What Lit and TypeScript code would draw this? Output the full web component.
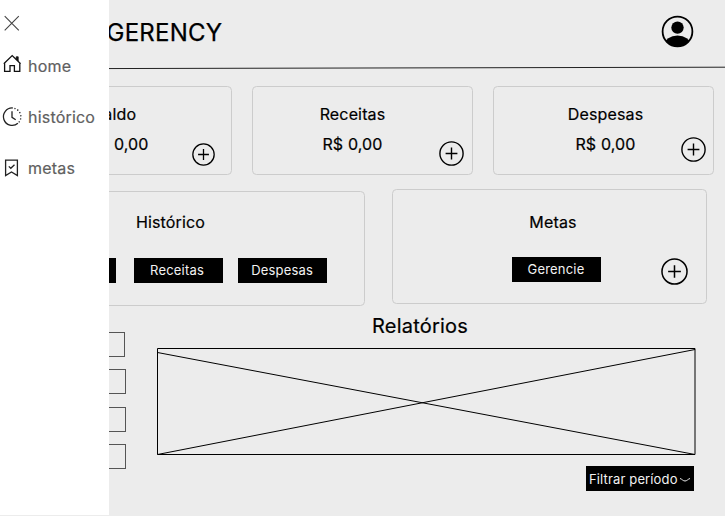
import { LitElement, html, css, svg } from "lit";
import { customElement, property } from "lit/decorators.js";

const closeIcon = svg`<path d="M4.7 16.2 18.8 30.3M18.8 16.2 4.7 30.3" stroke="#444" stroke-width="1.1"/>`;

@customElement("plus-button")
export class PlusButton extends LitElement {
  @property({ type: Number }) size = 25;
  static styles = css`
    :host { display: block; line-height: 0; }
    svg { display: block; }
  `;
  render() {
    return html`<svg width=${this.size} height=${this.size} viewBox="0 0 25 25" fill="none" stroke="#000" stroke-width="1.4">
      <circle cx="12.5" cy="12.5" r="11.6"></circle>
      <path d="M12.5 6.6v11.8M6.6 12.5h11.8"></path>
    </svg>`;
  }
}

@customElement("app-root")
export class AppRoot extends LitElement {
  static styles = css`
    :host {
      display: block; position: relative; width: 725px; height: 516px; overflow: hidden;
      background: #ececec; color: #000;
      font-family: Inter, "Liberation Sans", sans-serif; font-size: 16px; line-height: 20px;
    }
    * { box-sizing: border-box; }
    svg { display: block; }
    .page { display: flex; flex-direction: column; height: 516px; }
    header { display: flex; justify-content: space-between; height: 66px; padding: 15px 31px 0 106.5px; }
    h1 { margin: 3px 0 0; font-size: 24px; line-height: 30px; font-weight: 400; letter-spacing: .25px; -webkit-text-stroke: .25px #000; white-space: nowrap; }
    h2, p { margin: 0; font-size: 16px; line-height: 20px; font-weight: 400; text-align: center; letter-spacing: .15px; -webkit-text-stroke: .2px #000; white-space: nowrap; }
    .rule { flex: none; }
    .cards { display: grid; grid-template-columns: repeat(3, 221px); column-gap: 20px; padding: 15.5px 0 0 11px; }
    .card { display: grid; border: 1px solid #ccc; border-radius: 4.5px; }
    .cards .card { height: 89px; }
    .text { grid-area: 1 / 1; padding-top: 17px; display: flex; flex-direction: column; gap: 10px; }
    .receitas .text { padding-right: 20px; }
    .saldo .text { padding-right: 6px; }
    .saldo h2 { padding-right: 8px; }
    .despesas .text { padding-left: 4px; }
    plus-button { grid-area: 1 / 1; place-self: end; }
    .saldo plus-button { margin: 0 16px 8px 0; }
    .receitas plus-button { margin: 0 8px 8px 0; }
    .despesas plus-button { margin: 0 7px 12px 0; }
    .panels { display: flex; gap: 27px; padding: 14px 0 0 0; align-items: flex-start; }
    .history { width: 365px; height: 114.5px; margin-top: 2.5px; padding-top: 20px; grid-template-rows: 45.5px 25px; }
    .history h2 { padding-right: 24px; }
    .buttons { display: flex; padding-left: 26px; }
    .btn { width: 89px; height: 25px; background: #000; color: #f2f2f2; font-size: 13px; line-height: 24px; text-align: center; letter-spacing: .2px; }
    .history .btn:nth-child(1) { margin-right: 17.5px; }
    .history .btn:nth-child(2) { margin-right: 15.2px; }
    .history .btn:nth-child(2) { text-indent: -2px; }
    .goals { width: 315px; height: 115px; }
    .goals .text { padding-top: 22px; gap: 25px; padding-left: 7px; }
    .goals .btn { margin-left: 111.5px; }
    .goals plus-button { margin: 0 18px 18px 0; }
    .reports { display: flex; gap: 31px; padding-top: 8.5px; }
    .list { width: 126px; padding-top: 17.5px; display: flex; flex-direction: column; gap: 12.5px; }
    .item { height: 25px; border: 1px solid #555; }
    .list .item:first-child { width: 125.3px; }
    .chart { width: 539px; display: flex; flex-direction: column; }
    .chart h2 { font-size: 20px; line-height: 24px; padding-right: 13px; letter-spacing: .2px; }
    .chart svg.plot { margin-top: 9px; }
    .filter { align-self: flex-end; margin: 11px 2px 0 0; width: 108px; height: 25px; padding-left: 3px; background: #000; color: #f2f2f2; display: flex; align-items: center; gap: 1px; font-size: 13px; line-height: 24px; letter-spacing: .14px; white-space: nowrap; }
    aside { position: absolute; left: 0; top: 0; width: 109.4px; height: 515px; background: #fff; color: #606060; display: flex; flex-direction: column; }
    .close { height: 56px; flex: none; }
    nav { display: flex; flex-direction: column; gap: 31px; }
    nav a { display: flex; align-items: center; height: 20px; gap: 4px; letter-spacing: .2px; white-space: nowrap; -webkit-text-stroke: .2px #606060; }
    nav svg { flex: none; }
  `;

  render() {
    const card = (cls: string, label: string, size: number) => html`
      <section class="card ${cls}">
        <div class="text"><h2>${label}</h2><p>R$ 0,00</p></div>
        <plus-button .size=${size}></plus-button>
      </section>`;
    return html`
      <div class="page">
        <header>
          <h1>GERENCY</h1>
          <svg width="33" height="33" viewBox="0 0 33 33">
            <defs><clipPath id="face"><circle cx="16.5" cy="16.5" r="15"/></clipPath></defs>
            <circle cx="16.5" cy="16.5" r="14.9" fill="none" stroke="#000" stroke-width="1.8"/>
            <circle cx="16.5" cy="12.6" r="6.2"/>
            <ellipse cx="16.5" cy="29.5" rx="13" ry="9" clip-path="url(#face)"/>
          </svg>
        </header>
        <svg class="rule" width="725" height="4" viewBox="0 0 725 4"><path d="M0 2.8 725 1.2" stroke="#222" stroke-width="1"/></svg>
        <div class="cards">
          ${card("saldo", "Saldo", 23)}${card("receitas", "Receitas", 25)}${card("despesas", "Despesas", 25)}
        </div>
        <div class="panels">
          <section class="card history">
            <h2>Histórico</h2>
            <div class="buttons"><div class="btn">Saldo</div><div class="btn">Receitas</div><div class="btn">Despesas</div></div>
          </section>
          <section class="card goals">
            <div class="text"><h2>Metas</h2><div class="btn">Gerencie</div></div>
            <plus-button .size=${27}></plus-button>
          </section>
        </div>
        <div class="reports">
          <div class="list">${[0, 1, 2, 3].map(() => html`<div class="item"></div>`)}</div>
          <div class="chart">
            <h2>Relatórios</h2>
            <svg class="plot" width="539" height="108" viewBox="0 0 539 108" fill="none" stroke="#000">
              <path d="M.5 1.5H538V107.5H.5Z"/><path d="M.5 5.5 538 107.5M.5 107.5 538 2.5"/>
            </svg>
            <div class="filter"><span>Filtrar período</span>
              <svg width="12" height="8" viewBox="0 0 12 8" fill="none" stroke="#eee"><path d="M1 3.5C3 4 4 6 6 6S9 4 11 3.5"/></svg>
            </div>
          </div>
        </div>
      </div>
      <aside>
        <svg class="close" width="24" height="56" viewBox="0 0 24 56">${closeIcon}</svg>
        <nav>
          <a><svg width="24" height="24" viewBox="0 0 24 24" fill="none" stroke="#111" stroke-width="1.3">
            <path d="M4.6 9V17.4H10V11.6H14.4V17.4H19.8V9M3.8 9.8 12.2 1.6 20.6 9.8"/><path d="M16.2 2.8H18.2V7L16.2 5.2Z" fill="#111" stroke-width=".8"/></svg>home</a>
          <a><svg width="24" height="24" viewBox="0 0 24 24" fill="none" stroke="#222" stroke-width="1.3">
            <path d="M12.8 3A8.7 8.7 0 1 0 17.9 18.2M12 6.2V12.3L15.7 14.8"/><path d="M14.4 3.3A8.7 8.7 0 0 1 18.4 17.8" stroke-dasharray="1.3 1.9"/></svg>histórico</a>
          <a><svg width="24" height="24" viewBox="0 0 24 24" fill="none" stroke="#222" stroke-width="1.3">
            <path d="M5.6 4.2H17.4V19.6L11.5 16 5.6 19.6ZM8.8 10.4 10.8 12.3 14.5 8.8"/></svg>metas</a>
        </nav>
      </aside>`;
  }
}
